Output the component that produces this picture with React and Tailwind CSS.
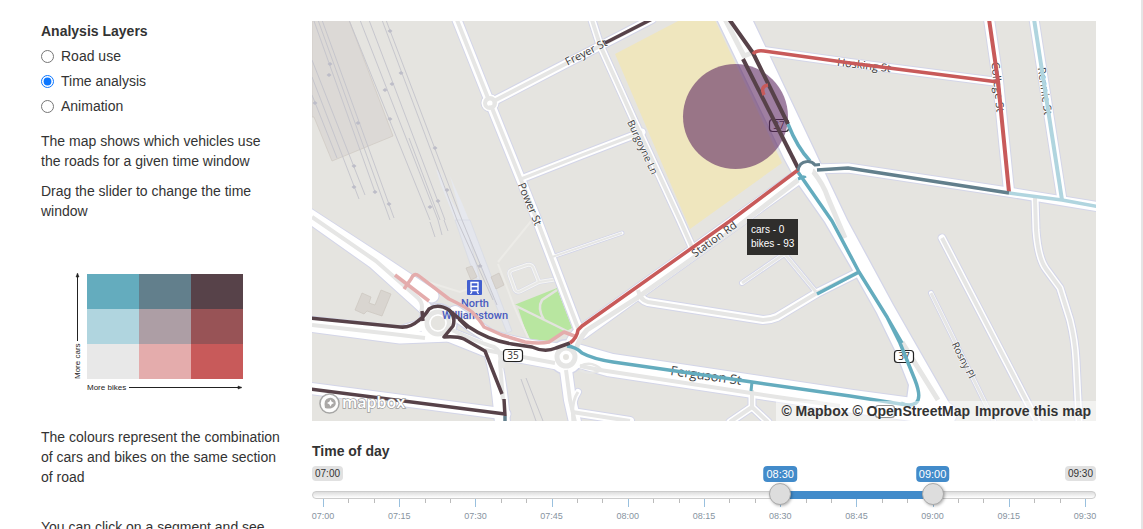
import { useState } from 'react';

const layers = ['Road use', 'Time analysis', 'Animation'];

const swatches = [
  ['#64acbe', '#627f8c', '#574249'],
  ['#b0d5df', '#ad9ea5', '#985356'],
  ['#e8e8e8', '#e4acac', '#c85a5a'],
];

const RED = '#c85a5a';
const TEAL = '#64acbe';
const DARK = '#574249';
const SLATE = '#627f8c';
const PALE = '#b0d5df';
const PINK = '#e4acac';

// Street beds: w is the width of the white bed, core the width of the grey middle.
const streets = [
  { d: 'M457 20 L490 103 L521 180 L537 220 L578 328', w: 9, core: 4 },
  { d: 'M490 103 L600 46 L652 19', w: 8, core: 4 },
  { d: 'M521 179 L582 155 L642 132', w: 7, core: 3 },
  { d: 'M592 20 L600 45 L632 116 L680 220 L692 247', w: 7, core: 4 },
  { d: 'M552 257 L622 233', w: 3, core: 2 },
  { d: 'M742 283 L790 250', w: 4, core: 3 },
  { d: 'M783 252 L816 292', w: 4, core: 3 },
  { d: 'M859 272 L817 293 L777 317 Q770 320 763 320 L648 302 Q640 300 638 290', w: 8, core: 4 },
  { d: 'M942 238 L1037 421', w: 7, core: 4 },
  { d: 'M931 293 L994 421', w: 4, core: 3 },
  { d: 'M1035 198 L1036 230 Q1038 258 1046 269 L1060 288 L1070 320 Q1075 340 1076 360 L1079 421', w: 7, core: 4 },
  { d: 'M752 390 L752 407 L730 422 M752 407 L768 422', w: 7, core: 4 },
  { d: 'M572 412 L630 421', w: 8, core: 4 },
  { d: 'M566 370 Q568 385 570 400 L575 422', w: 12, core: 4 },
  { d: 'M578 392 Q571 402 573 422', w: 6, core: 3 },
  { d: 'M989 19 L998 81 L1009 191', w: 10, core: 0 },
  { d: 'M753 54 Q756 50 764 51 L850 63 L998 82', w: 8, core: 0 },
  { d: 'M1034 19 L1062 200', w: 9, core: 0 },
  { d: 'M814 169 L848 168 L1008 192 L1100 207', w: 9, core: 0 },
  { d: 'M300 387 L505 414', w: 11, core: 0 },
  { d: 'M489 345 Q499 370 503 430', w: 15, core: 0 },
  { d: 'M298 208 L378 260 L432 296 M298 208 L374 262 L425 308', w: 13, core: 0 },
  { d: 'M300 321 L400 332 L425 324 M300 325 L400 338 L450 336', w: 11, core: 0 },
  { d: 'M455 313 L489 336 Q515 346 555 350 M450 335 L485 349 L560 363', w: 14, core: 0 },
  { d: 'M582 332 L730 226 L798 177', w: 14, core: 0 },
  { d: 'M575 355 L610 365 L850 401 L945 414', w: 23, core: 0 },
  { d: 'M582 330 Q568 342 568 360', w: 12, core: 0 },
];

const rails = [
  'M312 95 L337 158', 'M312 77 L359 199', 'M312 60 L365 195', 'M314 21 L375 192',
  'M318 20 L390 220', 'M322 20 L394 218', 'M349 20 L430 220', 'M360 20 L438 220',
  'M369 20 L445 220', 'M382 20 L457 220 L493 300', 'M386 20 L462 220 L497 305',
  'M409 138 L440 220', 'M430 222 L435 237', 'M438 220 L442 235', 'M444 220 L448 231',
  'M521 379 L536 421', 'M526 378 L543 421',
];

const railMarks = [
  [330, 64], [329, 75], [315, 103], [358, 123], [354, 166], [354, 187], [375, 192], [389, 204],
  [390, 31], [401, 73], [392, 84], [385, 90], [390, 119], [435, 148], [447, 190], [438, 201], [430, 207], [480, 266],
];

const flows = [
  { d: 'M605 43 L652 19', c: DARK },
  { d: 'M729 19 L753 53 L788 124', c: DARK, w: 4 },
  { d: 'M743 59 L798 168', c: DARK, w: 4 },
  { d: 'M768 85 Q760 86 764 95', c: RED },
  { d: 'M753 54 Q756 50 764 51 L850 63 L998 82', c: RED },
  { d: 'M989 19 L998 81 L1009 192', c: RED, w: 4 },
  { d: 'M1034 19 L1062 200', c: PALE, w: 4 },
  { d: 'M1009 193 L1062 200 L1100 207', c: PALE },
  { d: 'M817 170 L848 168 L1009 193', c: SLATE },
  { d: 'M788 124 Q797 147 810 161', c: TEAL },
  { d: 'M798 172 L832 221 L859 272 L887 317 L902 343 M887 317 L900 343 L915 380 Q922 398 916 403 Q910 407 901 403', c: TEAL },
  { d: 'M859 272 L817 294', c: TEAL },
  { d: 'M798 179 L806 176', c: TEAL, w: 3 },
  { d: 'M567 346 Q576 347 582 353 Q593 359 613 362 L752 382 L850 396 L907 405', c: TEAL },
  { d: 'M752 382 L751 391', c: TEAL, w: 3 },
  { d: 'M395 275 L429 301', c: PINK },
  { d: 'M404 289 L411 279 Q414 272 419 276 L449 299 Q466 307 472 312 Q480 320 484 327 L502 335 L525 342 Q540 344 549 342 L564 332 L577 337', c: PINK },
  { d: 'M310 318 L400 327 Q410 328 418 321 Q424 317 429 309 Q438 303 449 310 Q456 317 453 326 L444 337 Q457 336 464 339 L485 351 L502 394', c: DARK },
  { d: 'M449 310 L469 327 Q488 340 512 344 L532 347 Q545 353 556 348 L570 343', c: DARK },
  { d: 'M422 311 L423 321 M459 319 L468 328', c: DARK },
  { d: 'M310 389 L505 414 M504 399 L505 416', c: DARK },
  { d: 'M505 416 L505 422', c: SLATE },
  { d: 'M570 343 Q577 338 578 330 L582 326 L730 221 L798 170', c: RED },
];

function Shield({ x, y, children }) {
  return (
    <g>
      <rect x={x} y={y} width="19" height="12" rx="3" fill="#fff" stroke="#222" strokeWidth="1.2" />
      {children && <text x={x + 9.5} y={y + 9.5} textAnchor="middle" fontSize="10" fill="#333">{children}</text>}
    </g>
  );
}

function Label({ x, y, r, size = 11, children }) {
  return (
    <text transform={`translate(${x} ${y}) rotate(${r})`} y="4" textAnchor="middle" fontSize={size}
      fill="#3c3c3c" stroke="#fff" strokeWidth="1.5" strokeOpacity="0.6" paintOrder="stroke">{children}</text>
  );
}

function StreetMap() {
  return (
    <svg role="img" aria-label="Street map of North Williamstown" viewBox="312 21 784 400"
      preserveAspectRatio="xMidYMid slice" className="block h-full w-full bg-[#e5e4e0] font-['Open_Sans',sans-serif]">
      <path d="M312 20 H349 L393 136 L332 161 L314 117 H312 Z" fill="#dcd9d6" stroke="#cfc8c2" strokeWidth="0.7" />
      <path d="M436 169 L441 174 L446 190 L462 220 L455 220 L441 185 Z M450 176 L462 203 L469 220 L462 220 Z" fill="#e6e8ee" />
      <path d="M455 220 L470 220 L512 331 L507 333 L470 240 L480 280 L475 278 Z" fill="#e4e6ed" stroke="#d4d6e2" strokeWidth="0.6" />
      <path d="M680 20 H715 L782 163 L690 229 L615 54 Z" fill="#efe6be" />
      <path d="M514 305 L557 288 L572 328 L549 341 L530 339 Z" fill="#b8e6a0" />
      <path d="M514 305 L575 335 M557 290 L542 300 Q537 308 544 320 M557 285 L575 330 M516 306 L527 339" fill="none" stroke="#e3e3de" strokeWidth="2.5" />
      <path d="M355 310 L362 293 L371 297 L369 303 L375 305 L381 290 L391 294 L382 316 L367 311 L364 314 Z M466 268 L472 266 L477 277 L471 280 Z M491 277 L499 273 L504 285 L496 289 Z"
        fill="#d9d5d0" stroke="#ccc5be" strokeWidth="0.7" />
      <g fill="none" stroke="#c3c3cb" strokeWidth="0.9">
        {rails.map((d) => <path key={d} d={d} />)}
      </g>
      <g fill="#bdbdc8">
        {railMarks.map(([x, y]) => <path key={`${x}-${y}`} d={`M${x - 2.5} ${y} l2.5 -2 l2.5 2 l-2.5 2 Z`} />)}
      </g>
      <path d="M498 262 L532 220 M498 264 L514 306 L529 340 M415 278 L460 292 L478 285" fill="none" stroke="#ecebe7" strokeWidth="2" />
      <path d="M512 270 Q508 272 510 276 L515 290 Q517 293 521 291 L539 282 L533 267 Q531 264 527 265 Z M539 282 L558 279" fill="none" stroke="#d6d8e6" strokeWidth="5" />
      <path d="M512 270 Q508 272 510 276 L515 290 Q517 293 521 291 L539 282 L533 267 Q531 264 527 265 Z M539 282 L558 279" fill="none" stroke="#f5f5f4" strokeWidth="4" />
      <path d="M512 270 Q508 272 510 276 L515 290 Q517 293 521 291 L539 282 L533 267 Q531 264 527 265 Z M539 282 L558 279" fill="none" stroke="#e8e8e6" strokeWidth="2" />

      <g fill="none" stroke="#d3d5e8" strokeLinejoin="round" strokeLinecap="round">
        {streets.map((s) => <path key={s.d} d={s.d} strokeWidth={s.w + 2} />)}
        <path d="M717 19 L784 158 L797 182 L825 222 L850 265 L877 313 L896 352 L909 385 L907 400 L953 410 L893 305 L847 220 L828 180 L815 152 L752 19 Z" strokeWidth="2.5" />
        <circle cx="490" cy="103" r="9" />
        <circle cx="438" cy="323" r="19" strokeWidth="2" />
        <circle cx="566" cy="357" r="17" strokeWidth="2" />
      </g>
      <g fill="none" stroke="#fff" strokeLinejoin="round" strokeLinecap="round">
        {streets.map((s) => <path key={s.d} d={s.d} strokeWidth={s.w} />)}
      </g>
      <path d="M717 19 L784 158 L797 182 L825 222 L850 265 L877 313 L896 352 L909 385 L907 400 L953 410 L893 305 L847 220 L828 180 L815 152 L752 19 Z" fill="#fff" />
      <g fill="#fff">
        <circle cx="490" cy="103" r="8.5" />
        <circle cx="438" cy="323" r="18.5" />
        <circle cx="566" cy="357" r="16.5" />
        <circle cx="806" cy="169" r="13" />
      </g>
      <g fill="none" stroke="#e6e6e5" strokeLinejoin="round">
        {streets.filter((s) => s.core > 0).map((s) => <path key={s.d} d={s.d} strokeWidth={s.core} />)}
        <path d="M725 19 L744 56 L754 52 M812 170 Q824 185 828 198 L845 238 M902 342 L938 400 M798 180 L740 225 L637 298 L587 330 Q578 340 576 350" strokeWidth="5" />
        <path d="M312 325 L392 334 L425 338 M485 350 L555 363 M580 366 L600 370 L777 397 L840 406 M312 217 L376 261 L418 298 Q424 304 421 312" strokeWidth="4" />
        <path d="M452 330 Q480 343 494 347 Q502 352 500 362 L503 400 M520 352 Q504 355 502 368" strokeWidth="4" />
        <path d="M580 366 Q592 360 602 370 Q590 376 580 370" strokeWidth="2.5" />
        <circle cx="438" cy="323" r="11" strokeWidth="5" />
        <circle cx="566" cy="357" r="9" strokeWidth="5" />
        <circle cx="490" cy="103" r="5" strokeWidth="4" />
      </g>
      <circle cx="490" cy="103" r="2.5" fill="#fff" />
      <circle cx="438" cy="323" r="8" fill="#e5e4e0" stroke="#fff" strokeWidth="1.5" />
      <circle cx="566" cy="357" r="4" fill="#e5e4e0" stroke="#fff" strokeWidth="2" />

      <Label x={586} y={52} r={-27}>Freyer St</Label>
      <Label x={530} y={204} r={67}>Power St</Label>
      <Label x={643} y={147} r={65} size={10}>Burgoyne Ln</Label>
      <Label x={714} y={239} r={-36}>Station Rd</Label>
      <Label x={864} y={65} r={7}>Hosking St</Label>
      <Label x={998} y={87} r={84}>College St</Label>
      <Label x={1045} y={91} r={82} size={11}>Rennie St</Label>
      <Label x={706} y={376} r={8} size={13}>Ferguson St</Label>
      <Label x={964} y={360} r={63} size={10}>Rosny Pl</Label>
      <g className="font-['Roboto',sans-serif]" fontSize="11" fontWeight="500" fill="#4a5cc0" textAnchor="middle" stroke="#e5e4e0" strokeWidth="1" paintOrder="stroke">
        <text x="475" y="307">North</text>
        <text x="475" y="319">Williamstown</text>
      </g>
      <rect x="467" y="280" width="15" height="15" rx="1" fill="#4360d0" />
      <path d="M471 282.5 h7 v8 h-7 z M471 286.5 h7 M472 291.5 l-1.500 2.500 M477 291.5 l1.500 2.500" fill="none" stroke="#fff" strokeWidth="1.4" />
      <Shield x={769.5} y={119.5}>37</Shield>
      <Shield x={894.5} y={350.5}>37</Shield>
      <Shield x={503.5} y={349.5}>35</Shield>
      <Shield x={875.5} y={405.5} />

      <circle cx="735.5" cy="116.5" r="52.5" fill="#5f2a62" fillOpacity="0.6" />

      <g fill="none" strokeLinejoin="round">
        {flows.map((f) => <path key={f.d} d={f.d} stroke={f.c} strokeWidth={f.w || 3.5} />)}
        <circle cx="806.5" cy="169.5" r="6.5" fill="#fff" stroke="none" />
        <path d="M798 171 Q799 162 807 161.5 Q812 161 815 165 L820 164.5" stroke={SLATE} strokeWidth="3" />
      </g>

      <g>
        <circle cx="329.5" cy="403.5" r="9.5" fill="#fff" fillOpacity="0.9" stroke="#777" strokeOpacity="0.6" strokeWidth="1.5" />
        <path d="M325 408 Q323 399 329 398 A5 5 0 1 1 332 408 Q329 409 325 408 Z" fill="#aaa8a6" />
        <path d="M330.5 399.5 l1.2 2.3 l2.3 1.2 l-2.3 1.2 l-1.2 2.3 l-1.2 -2.3 l-2.3 -1.2 l2.3 -1.2 Z" fill="#fff" />
        <text x="342" y="408" fontSize="16" fontWeight="600" className="font-['Open_Sans',sans-serif]" fill="#fff" stroke="#888" strokeOpacity="0.8" strokeWidth="1.5" paintOrder="stroke">mapbox</text>
      </g>
    </svg>
  );
}

function Legend() {
  return (
    <svg role="img" aria-label="Colour key for cars and bikes" viewBox="0 0 242 146" className="block w-full font-['Liberation_Sans',Arial,sans-serif]">
      {swatches.map((row, r) =>
        row.map((fill, c) => <rect key={fill} x={46 + c * 52} y={13 + r * 35} width="52" height="35" fill={fill} />)
      )}
      <g stroke="#222" fill="#222">
        <path d="M36.5 80 V15 M88 126.5 H199" fill="none" />
        <path d="M36.5 12 l-1.5 4 h3 Z M201 126.5 l-4 -1.5 v3 Z" strokeWidth="0.5" />
      </g>
      <text x="46" y="129" fontSize="8" fill="#222">More bikes</text>
      <text transform="translate(39 118) rotate(-90)" fontSize="8" fill="#222">More cars</text>
    </svg>
  );
}

const START = 420;
const END = 570;
const toTime = (m) => `${String(Math.floor(m / 60)).padStart(2, '0')}:${String(m % 60).padStart(2, '0')}`;
const pct = (m) => `${((m - START) / (END - START)) * 100}%`;
const ticks = Array.from({ length: 31 }, (_, i) => START + i * 5);

const rangeClass =
  'pointer-events-none absolute inset-x-0 top-0 m-0 h-[22px] w-full appearance-none bg-transparent ' +
  '[&::-webkit-slider-thumb]:pointer-events-auto [&::-webkit-slider-thumb]:size-[22px] [&::-webkit-slider-thumb]:appearance-none ' +
  '[&::-webkit-slider-thumb]:rounded-full [&::-webkit-slider-thumb]:border [&::-webkit-slider-thumb]:border-[#aaa] ' +
  '[&::-webkit-slider-thumb]:bg-[#ddd] [&::-webkit-slider-thumb]:shadow-[1px_1px_3px_rgba(0,0,0,0.3)]';

function TimeSlider() {
  const [from, setFrom] = useState(510);
  const [to, setTo] = useState(540);
  return (
    <section className="mt-5">
      <h2 className="text-sm leading-5 font-bold">Time of day</h2>
      <div className="relative mt-[5px] flex h-4 items-start justify-between text-[10px] leading-[15px]">
        <span className="rounded bg-[#e1e1e1] px-[3px]">{toTime(START)}</span>
        <span className="rounded bg-[#e1e1e1] px-[3px]">{toTime(END)}</span>
        <div className="absolute inset-x-[11px] top-0 text-[11px] leading-4 text-white">
          <span className="absolute -translate-x-1/2 rounded bg-[#428bca] px-[3px]" style={{ left: pct(from) }}>{toTime(from)}</span>
          <span className="absolute -translate-x-1/2 rounded bg-[#428bca] px-[3px]" style={{ left: pct(to) }}>{toTime(to)}</span>
        </div>
      </div>
      <div className="relative mt-px h-[22px] pt-2">
        <div className="h-2 rounded-full border border-[#ccc] bg-linear-to-b from-[#ddd] to-white" />
        <div className="absolute inset-x-[11px] top-2 h-2">
          <div className="absolute h-2 bg-[#428bca]" style={{ left: pct(from), width: `${((to - from) / (END - START)) * 100}%` }} />
          {ticks.map((t) => (
            <span key={t} className={t % 15 === 0 ? 'absolute top-2 h-2 w-px bg-[#99c0de]' : 'absolute top-2 h-1 w-px bg-[#bbb]'} style={{ left: pct(t) }} />
          ))}
        </div>
        <input type="range" aria-label="From" min={START} max={END} step={5} value={from}
          onChange={(e) => setFrom(Math.min(+e.target.value, to))} className={rangeClass} />
        <input type="range" aria-label="To" min={START} max={END} step={5} value={to}
          onChange={(e) => setTo(Math.max(+e.target.value, from))} className={rangeClass} />
      </div>
      <div className="relative mx-[11px] mt-[5px] h-3 text-[9px] leading-3 text-[#87949f]">
        {ticks.filter((t) => t % 15 === 0).map((t) => (
          <span key={t} className="absolute -translate-x-1/2" style={{ left: pct(t) }}>{toTime(t)}</span>
        ))}
      </div>
    </section>
  );
}

export default function App() {
  const [layer, setLayer] = useState('Time analysis');
  return (
    <div className="flex h-screen gap-[29px] overflow-y-auto border-r-2 border-[#e5e5e5] bg-white pt-[21px] pr-[45px] pl-[41px] font-['Liberation_Sans',Arial,sans-serif] text-sm leading-5 text-[#333] [scrollbar-width:none]">
      <aside className="w-[242px] shrink-0">
        <fieldset>
          <legend className="mb-[5px] font-bold">Analysis Layers</legend>
          <div className="flex flex-col gap-[5px]">
            {layers.map((name) => (
              <label key={name} className="flex items-center gap-[7px]">
                <input type="radio" name="layer" checked={layer === name} onChange={() => setLayer(name)} className="size-[13px] accent-[#0b76ff]" />
                {name}
              </label>
            ))}
          </div>
        </fieldset>
        <p className="mt-[15px]">The map shows which vehicles use the roads for a given time window</p>
        <p className="mt-[10px]">Drag the slider to change the time window</p>
        <div className="mt-10 mb-5">
          <Legend />
        </div>
        <p>The colours represent the combination of cars and bikes on the same section of road</p>
        <p className="mt-[30px]">You can click on a segment and see</p>
      </aside>
      <main className="min-w-0 flex-1">
        <div className="relative h-[400px] overflow-hidden">
          <StreetMap />
          <div className="absolute top-[198px] left-[435px] bg-[#2f2e2c] px-1 py-1 text-[10px] leading-[14px] whitespace-nowrap text-white">
            <div>cars - 0</div>
            <div>bikes - 93</div>
          </div>
          <div className="absolute right-0 bottom-0 flex gap-[5px] bg-white/50 px-[5px] font-bold">
            <span>
              <a href="#mapbox">© Mapbox</a> <a href="#openstreetmap">© OpenStreetMap</a>
            </span>
            <a href="#improve">Improve this map</a>
          </div>
        </div>
        <TimeSlider />
      </main>
    </div>
  );
}
